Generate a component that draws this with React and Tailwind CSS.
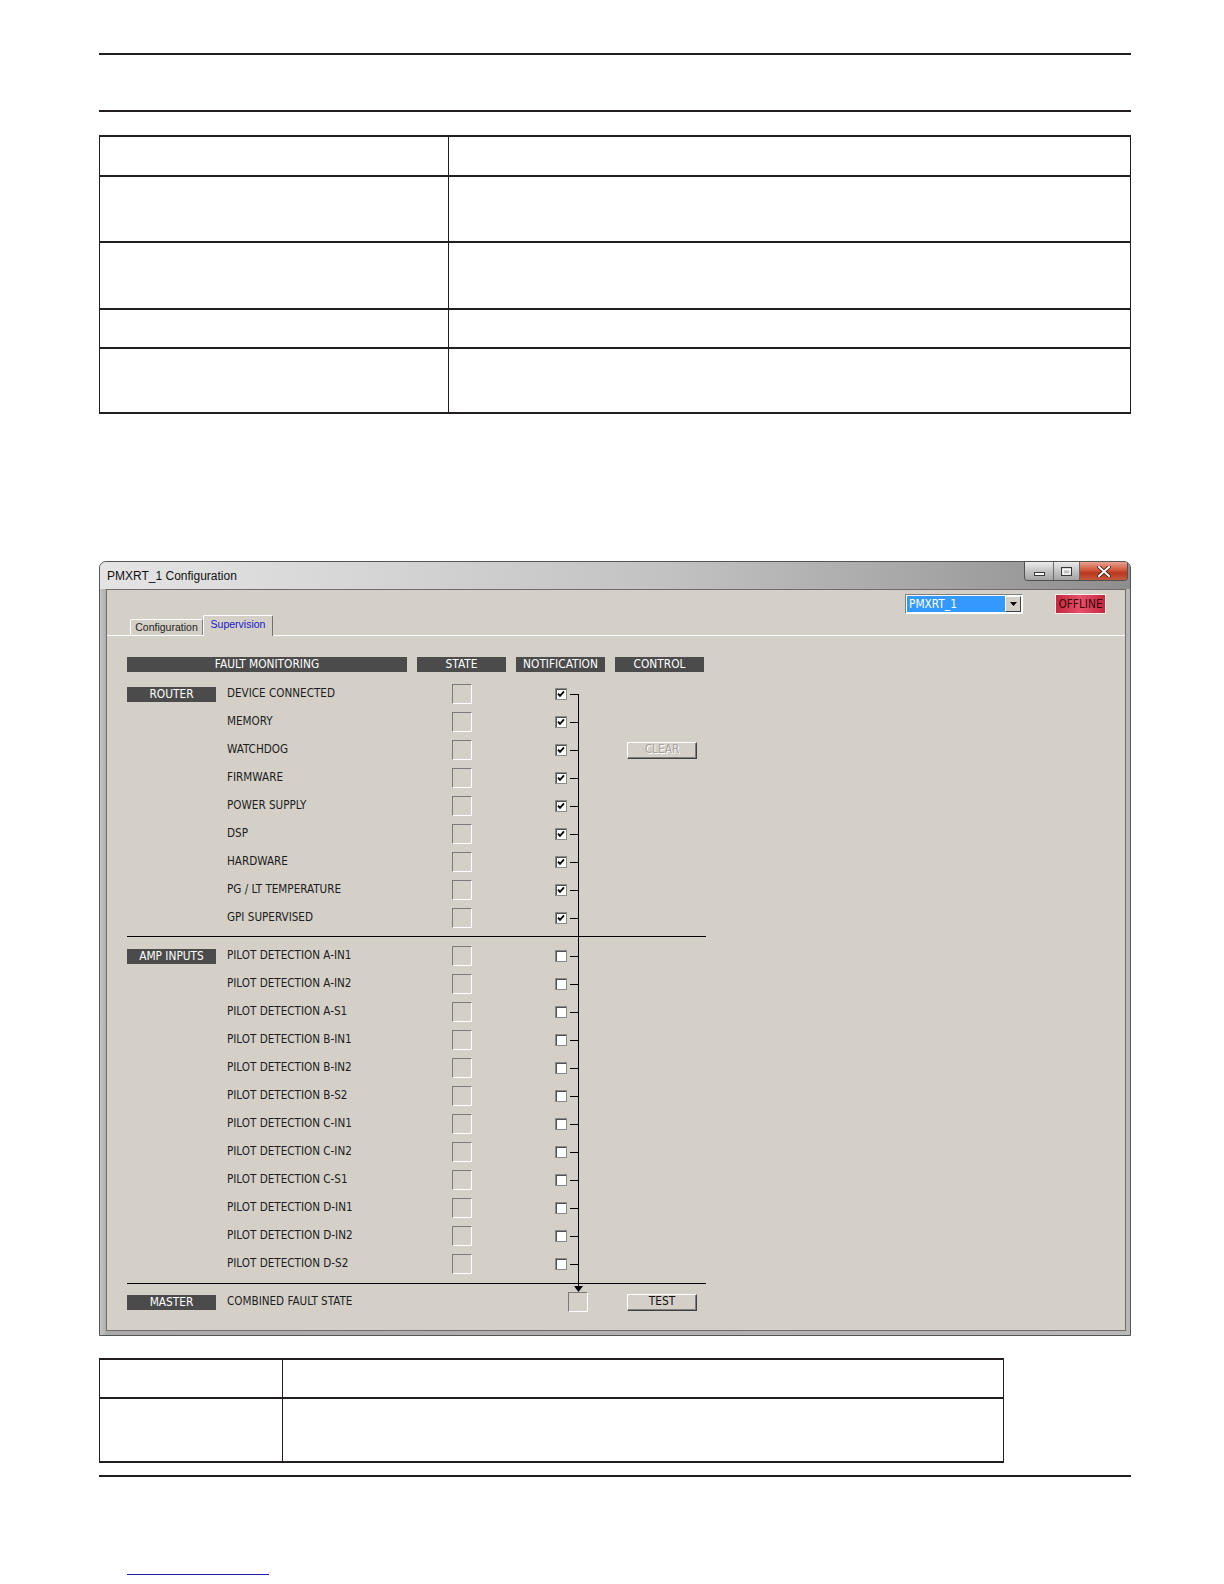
import React from 'react';

// narrow UI font used by the supervision panel
const narrow = "font-['Liberation_Sans_Narrow','DejaVu_Sans_Condensed','Liberation_Sans',sans-serif] font-stretch-condensed";
const sans = "font-['Liberation_Sans',Arial,sans-serif]";

const routerRows = [
  'DEVICE CONNECTED',
  'MEMORY',
  'WATCHDOG',
  'FIRMWARE',
  'POWER SUPPLY',
  'DSP',
  'HARDWARE',
  'PG / LT TEMPERATURE',
  'GPI SUPERVISED',
];

const ampRows = [
  'PILOT DETECTION A-IN1',
  'PILOT DETECTION A-IN2',
  'PILOT DETECTION A-S1',
  'PILOT DETECTION B-IN1',
  'PILOT DETECTION B-IN2',
  'PILOT DETECTION B-S2',
  'PILOT DETECTION C-IN1',
  'PILOT DETECTION C-IN2',
  'PILOT DETECTION C-S1',
  'PILOT DETECTION D-IN1',
  'PILOT DETECTION D-IN2',
  'PILOT DETECTION D-S2',
];

const Bar = ({ w, children }) => (
  <div className={`${w} h-[15px] bg-[#4b4b4b] text-white text-center text-[11.8px] leading-[15px] ${narrow}`}>
    {children}
  </div>
);

const StateBox = () => (
  <div className="w-[20px] h-[20px] shrink-0 border border-t-[#7a7a7a] border-l-[#7a7a7a] border-b-white border-r-white" />
);

const CheckBox = ({ checked }) => (
  <div className="w-[12px] h-[12px] shrink-0 border border-[#8a8a8a] bg-white shadow-[inset_1px_1px_0_#505050] flex items-center justify-center">
    {checked && (
      <svg width="8" height="8" viewBox="0 0 8 8">
        <path d="M1 3.6 L3 5.9 L7 1.3" fill="none" stroke="#000" strokeWidth="1.8" />
      </svg>
    )}
  </div>
);

const Connector = ({ first }) => (
  <div className="w-[12px] self-stretch flex flex-col">
    <div className={`flex-1 ${first ? '' : 'border-r border-black'}`} />
    <div className="h-px flex">
      <div className="ml-[3px] w-[8px] bg-black" />
      <div className="w-px bg-black" />
    </div>
    <div className="flex-1 border-r border-black" />
  </div>
);

const Btn = ({ children, disabled }) => (
  <div
    className={`w-[70px] h-[17px] bg-[#d4d0c8] border border-t-white border-l-white border-r-[#404040] border-b-[#404040] shadow-[inset_-1px_-1px_0_#808080] flex items-center justify-center text-[11.8px] ${narrow} ${
      disabled ? 'text-[#a8a49c] [text-shadow:1px_1px_0_#fff]' : 'text-[#111]'
    }`}
  >
    {children}
  </div>
);

const Row = ({ group, label, checked, first, control }) => (
  <div className="flex items-center h-[28px]">
    <div className="w-[89px]">{group && <Bar w="w-[89px]">{group}</Bar>}</div>
    <div className={`w-[236px] pl-[11px] text-[11.6px] text-[#1c1c1c] ${narrow}`}>{label}</div>
    <StateBox />
    <div className="w-[83px]" />
    <CheckBox checked={checked} />
    <Connector first={first} />
    <div className="w-[48px]" />
    <div className="w-[70px]">{control}</div>
  </div>
);

const Separator = ({ h, top }) => (
  <div className={`flex ${h}`}>
    <div className={`w-[451px] ${top}`}>
      <div className="h-px bg-black" />
    </div>
    <div className="w-px bg-black" />
    <div className={`w-[127px] ${top}`}>
      <div className="h-px bg-black" />
    </div>
  </div>
);

const TitleBar = () => (
  <div className="h-[27px] flex items-start bg-[linear-gradient(to_right,#e4e4e4_0%,#d6d6d6_25%,#c2c2c2_55%,#a6a6a6_80%,#8e8e8e_100%)]">
    <div className={`flex-1 pl-[7px] pt-[7px] text-[12px] leading-[14px] text-[#111] ${sans}`}>PMXRT_1 Configuration</div>
    <div className="flex h-[19px] mr-[2px] rounded-b-[4px] overflow-hidden border border-t-0 border-[#505050]">
      <div className="w-[29px] bg-[linear-gradient(to_bottom,#ececec,#c4c4c4_50%,#a4a4a4)] border-r border-[#6a6a6a] flex items-end justify-center pb-[4px]">
        <svg width="11" height="4" viewBox="0 0 11 4">
          <rect x="0.5" y="0.5" width="10" height="3" fill="#fff" stroke="#3a3a3a" />
        </svg>
      </div>
      <div className="w-[26px] bg-[linear-gradient(to_bottom,#ececec,#c4c4c4_50%,#a4a4a4)] border-r border-[#6a6a6a] flex items-center justify-center">
        <svg width="11" height="9" viewBox="0 0 11 9">
          <rect x="0.5" y="0.5" width="10" height="8" fill="none" stroke="#3a3a3a" />
          <rect x="2" y="2.5" width="7" height="4.5" fill="none" stroke="#fff" strokeWidth="1.4" />
        </svg>
      </div>
      <div className="w-[47px] bg-[linear-gradient(to_bottom,#e9a08e,#d0583c_45%,#b8381e_60%,#c65a3e)] flex items-center justify-center">
        <svg width="14" height="11" viewBox="0 0 14 11">
          <path d="M2 1 L12 10 M12 1 L2 10" stroke="#3a1a10" strokeWidth="3.6" strokeLinecap="square" />
          <path d="M2 1 L12 10 M12 1 L2 10" stroke="#fff" strokeWidth="2" strokeLinecap="square" />
        </svg>
      </div>
    </div>
  </div>
);

const Window = () => (
  <div className="h-[775px] flex flex-col rounded-t-[7px] overflow-hidden border border-[#555] bg-[#b6b6b6]">
    <TitleBar />
    <div className="flex-1 flex pl-[6px] pr-[4px] pb-[4px] bg-[linear-gradient(to_right,#c6c6c6,#aaaaaa_0.7%,#b8b8b8)]">
      <div className="flex-1 flex flex-col bg-[#d4d0c8] border border-[#6c6c6c]">
        {/* top strip */}
        <div className="flex justify-end items-start pt-[4px] pr-[19px] h-[24px]">
          <div className="w-[118px] h-[20px] bg-white border border-t-[#808080] border-l-[#808080] border-b-white border-r-white flex p-px">
            <div className={`flex-1 bg-[#3399ff] text-white text-[11.8px] leading-[16px] pl-[2px] ${narrow}`}>PMXRT_1</div>
            <div className="w-[16px] bg-[#d4d0c8] border border-t-white border-l-white border-r-[#404040] border-b-[#404040] flex items-center justify-center">
              <svg width="7" height="4" viewBox="0 0 7 4">
                <path d="M0 0 H7 L3.5 4 Z" fill="#000" />
              </svg>
            </div>
          </div>
          <div className="w-[32px]" />
          <div className={`w-[51px] h-[20px] border border-[#f2eeee] bg-[linear-gradient(to_right,#c4283f,#e6506a_50%,#c4283f)] text-[#3a0808] text-[11.8px] leading-[18px] text-center ${narrow}`}>
            OFFLINE
          </div>
        </div>
        {/* tabs */}
        <div className="h-[21px] flex items-end pl-[23px]">
          <div className={`w-[73px] h-[16px] border-t border-l border-white border-r border-r-[#808080] rounded-tl-[2px] text-[10.5px] leading-[15px] text-center text-[#222] ${sans}`}>
            Configuration
          </div>
          <div className={`relative z-10 -mb-px w-[70px] h-[21px] bg-[#d4d0c8] border-t border-l border-white border-r border-r-[#707070] rounded-t-[2px] text-[10.5px] leading-[16px] text-center text-[#1515c8] ${sans}`}>
            Supervision
          </div>
        </div>
        {/* tab page */}
        <div className="flex-1 border-t border-white pt-[21px] pl-[20px]">
          <div className="flex gap-[10px]">
            <Bar w="w-[280px]">FAULT MONITORING</Bar>
            <Bar w="w-[89px]">STATE</Bar>
            <Bar w="w-[89px]">NOTIFICATION</Bar>
            <Bar w="w-[89px]">CONTROL</Bar>
          </div>
          <div className="mt-[8px]">
            {routerRows.map((label, i) => (
              <Row
                key={label}
                group={i === 0 ? 'ROUTER' : null}
                label={label}
                checked
                first={i === 0}
                control={label === 'WATCHDOG' ? <Btn disabled>CLEAR</Btn> : null}
              />
            ))}
            <Separator h="h-[10px]" top="pt-[4px]" />
            {ampRows.map((label, i) => (
              <Row key={label} group={i === 0 ? 'AMP INPUTS' : null} label={label} checked={false} />
            ))}
            <Separator h="h-[8px]" top="pt-[5px]" />
            <div className="flex items-center h-[32px]">
              <Bar w="w-[89px]">MASTER</Bar>
              <div className={`w-[236px] pl-[11px] text-[11.6px] text-[#1c1c1c] ${narrow}`}>COMBINED FAULT STATE</div>
              <div className="w-[116px]" />
              <div className="w-[20px] self-start flex flex-col items-center">
                <svg width="9" height="6" viewBox="0 0 9 6">
                  <path d="M0 0 H9 L4.5 6 Z" fill="#000" />
                </svg>
                <StateBox />
              </div>
              <div className="w-[39px]" />
              <Btn>TEST</Btn>
            </div>
          </div>
        </div>
      </div>
    </div>
  </div>
);

const tableRows = ['h-[40px]', 'h-[66px]', 'h-[67px]', 'h-[39px]', 'h-[65px]'];
const smallRows = ['h-[39px]', 'h-[64px]'];

export default function App() {
  return (
    <div className="w-[1224px] min-h-[1584px] bg-white">
      <div className="ml-[99px] w-[1032px] pt-[53px]">
        <div className="h-[2px] bg-[#231f20]" />
        <div className="h-[2px] bg-[#231f20] mt-[55px]" />

        {/* top table */}
        <div className="mt-[23px] border-x border-x-[#231f20] border-b-2 border-b-[#231f20]">
          {tableRows.map((h, i) => (
            <div key={i} className={`flex ${h} border-t-2 border-[#231f20]`}>
              <div className="w-[349px] border-r border-[#231f20]" />
              <div className="flex-1" />
            </div>
          ))}
        </div>

        <div className="mt-[147px]">
          <Window />
        </div>

        {/* bottom table */}
        <div className="mt-[22px] w-[905px] border-x border-x-[#231f20] border-b-2 border-b-[#231f20]">
          {smallRows.map((h, i) => (
            <div key={i} className={`flex ${h} border-t-2 border-[#231f20]`}>
              <div className="w-[183px] border-r border-[#231f20]" />
              <div className="flex-1" />
            </div>
          ))}
        </div>

        <div className="h-[2px] bg-[#231f20] mt-[12px]" />
        <div className="ml-[28px] mt-[97px] w-[142px] h-px bg-[#1f1fb0]" />
      </div>
    </div>
  );
}
